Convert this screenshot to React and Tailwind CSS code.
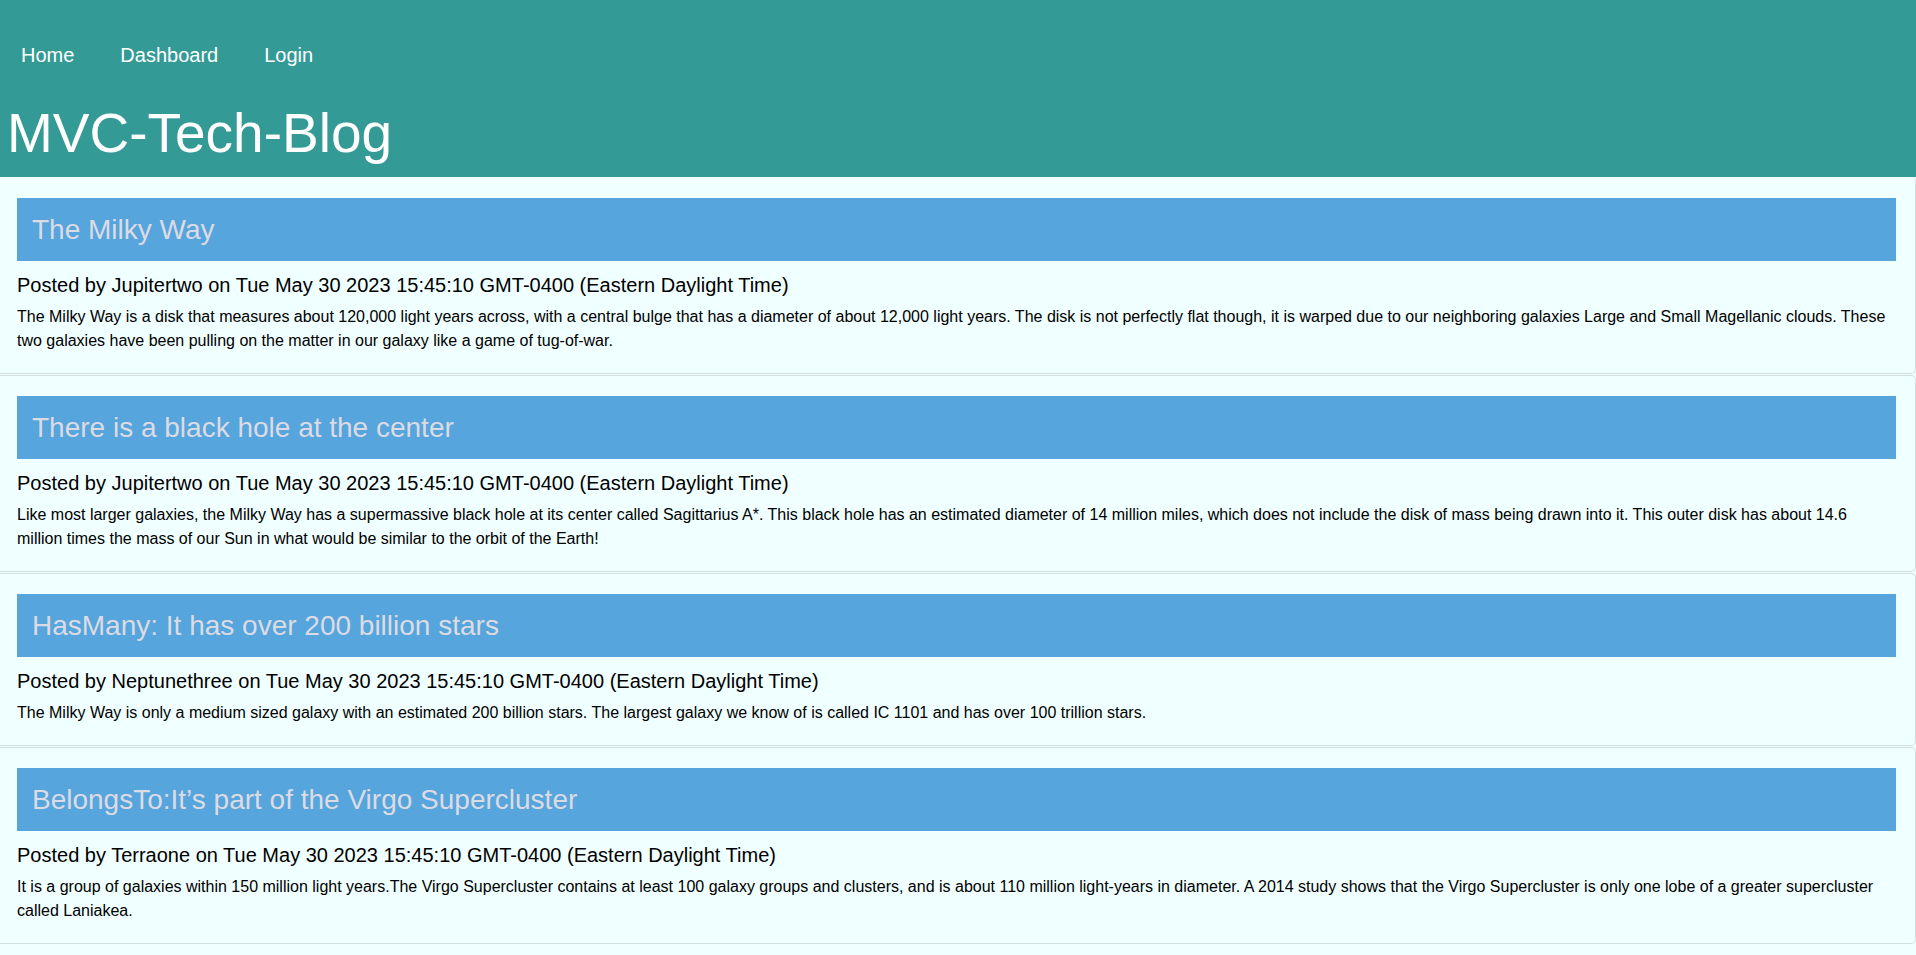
import React from "react";

const posts = [
  {
    title: "The Milky Way",
    author: "Jupitertwo",
    body:
      "The Milky Way is a disk that measures about 120,000 light years across, with a central bulge that has a diameter of about 12,000 light years. The disk is not perfectly flat though, it is warped due to our neighboring galaxies Large and Small Magellanic clouds. These two galaxies have been pulling on the matter in our galaxy like a game of tug-of-war.",
  },
  {
    title: "There is a black hole at the center",
    author: "Jupitertwo",
    body:
      "Like most larger galaxies, the Milky Way has a supermassive black hole at its center called Sagittarius A*. This black hole has an estimated diameter of 14 million miles, which does not include the disk of mass being drawn into it. This outer disk has about 14.6 million times the mass of our Sun in what would be similar to the orbit of the Earth!",
  },
  {
    title: "HasMany: It has over 200 billion stars",
    author: "Neptunethree",
    body:
      "The Milky Way is only a medium sized galaxy with an estimated 200 billion stars. The largest galaxy we know of is called IC 1101 and has over 100 trillion stars.",
  },
  {
    title: "BelongsTo:It\u2019s part of the Virgo Supercluster",
    author: "Terraone",
    body:
      "It is a group of galaxies within 150 million light years.The Virgo Supercluster contains at least 100 galaxy groups and clusters, and is about 110 million light-years in diameter. A 2014 study shows that the Virgo Supercluster is only one lobe of a greater supercluster called Laniakea.",
  },
];

const DATE = "Tue May 30 2023 15:45:10 GMT-0400 (Eastern Daylight Time)";

export default function App() {
  return (
    <div className="min-h-[955px] bg-[#f0ffff] text-black font-['Liberation_Sans',Arial,sans-serif] overflow-hidden">
      <header className="bg-[#349a96] text-white pt-[44px] pb-[12px]">
        <nav className="flex gap-[46px] pl-[21px] text-[20px] leading-[23px]">
          <a href="#">Home</a>
          <a href="#">Dashboard</a>
          <a href="#">Login</a>
        </nav>
        <h1 className="mt-[34px] pl-[7px] text-[55px] leading-[64px] font-normal">MVC-Tech-Blog</h1>
      </header>
      <main className="flex flex-col gap-px">
        {posts.map((p, i) => (
          <article
            key={i}
            className={
              "bg-[#f0ffff] border border-l-0 border-[#d3dede] rounded-r-[5px] pl-[17px] pr-[19px] pt-[20px] pb-[20px] " +
              (i === 0 ? "border-t-0 pt-[21px]" : "")
            }
          >
            <h2 className="bg-[#56a5dd] text-[#dcdbe4] text-[28px] leading-[33px] py-[15px] pl-[15px] font-normal">
              {p.title}
            </h2>
            <p className="mt-[13px] mb-[8px] text-[20px] leading-[23px]">
              Posted by {p.author} on {DATE}
            </p>
            <p className="text-[16px] leading-[24px]">{p.body}</p>
          </article>
        ))}
      </main>
    </div>
  );
}
